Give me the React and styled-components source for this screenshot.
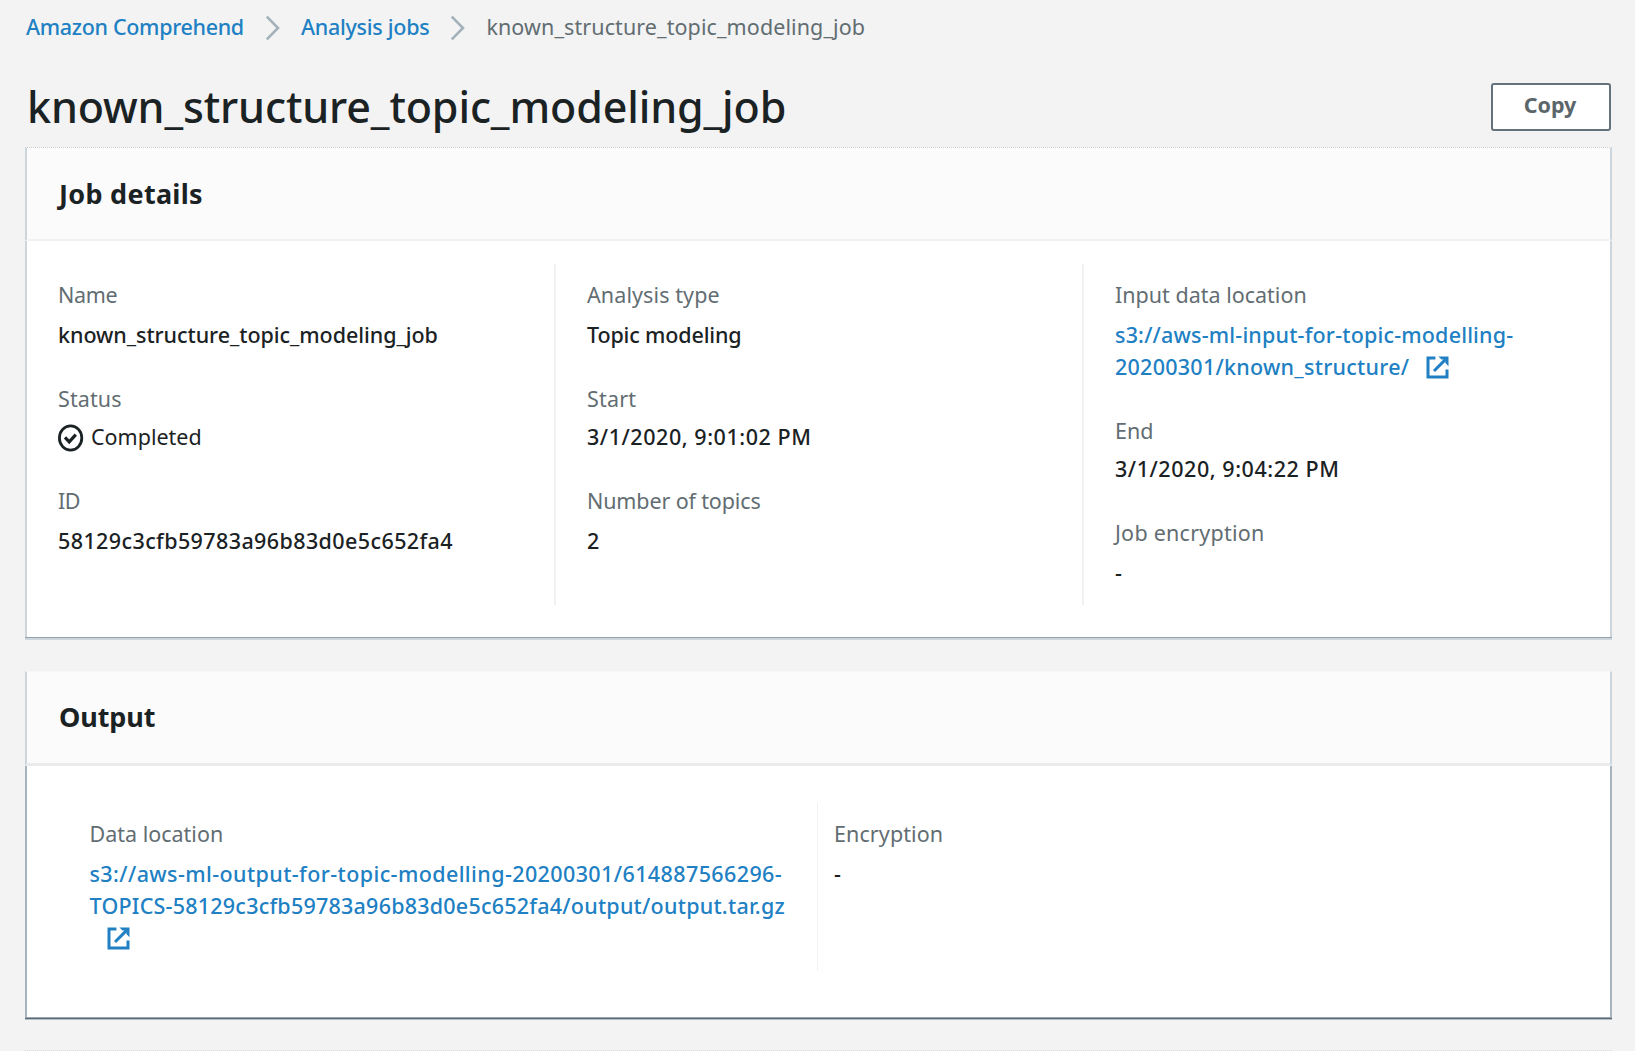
import React from 'react';
import styled, { createGlobalStyle } from 'styled-components';

const GlobalStyle = createGlobalStyle`
  * { box-sizing: border-box; }
  body {
    margin: 0;
    background: #f3f3f3;
    color: #1b2224;
    font-family: "Noto Sans", "Open Sans", sans-serif;
    font-size: 21.5px;
    line-height: 32px;
    overflow: hidden;
  }
`;

const Page = styled.main`
  height: 1051px;
  padding: 11px 23px 0 25px;
  overflow: hidden;
`;

const Breadcrumbs = styled.nav`
  display: flex;
  align-items: center;
  height: 32px;
  padding-left: 1px;
`;

const Link = styled.a`
  color: #2080c3;
  font-weight: 500;
  letter-spacing: ${(p) => p.$track || 0}px;
  white-space: nowrap;
`;

const Crumb = styled.span`
  color: #626d72;
  letter-spacing: 0.09px;
`;

const Separator = styled.svg`
  width: 16px;
  height: 26px;
  margin: 1px 20px 0 21px;
  flex: none;
`;

const TitleRow = styled.header`
  display: flex;
  justify-content: space-between;
  align-items: flex-start;
  height: 104px;
  padding: 37px 1px 0;
`;

const Title = styled.h1`
  margin: 0;
  padding-left: 1px;
  font-size: 43px;
  font-weight: 500;
  line-height: 54px;
  letter-spacing: -0.13px;
`;

const CopyButton = styled.button`
  width: 120px;
  height: 48px;
  margin-top: 3px;
  padding: 0 2px 5px 0;
  border: 2px solid #65727a;
  border-radius: 3px;
  background: #fff;
  color: #5b666b;
  font: 700 21.5px/32px "Noto Sans", sans-serif;
`;

const Card = styled.section`
  margin-bottom: ${(p) => p.$gap}px;
`;

const CardHeader = styled.div`
  display: flex;
  align-items: center;
  height: ${(p) => p.$height}px;
  padding: 0 0 ${(p) => p.$lift || 0}px 32px;
  border: 2px solid #cdd5dc;
  border-top: 1px dotted ${(p) => p.$top};
  border-bottom: ${(p) => p.$rule};
  background: #fbfbfb;
`;

const Heading = styled.h2`
  margin: 0;
  font-size: 27px;
  line-height: 34px;
  font-weight: 700;
  letter-spacing: ${(p) => p.$track}px;
`;

const DetailsBody = styled.div`
  display: grid;
  grid-template-columns: 527px 528px 1fr;
  padding: 23px 0 32px;
  background: #fff;
  border: solid #cdd5dc;
  border-width: 0 2px;
  box-shadow: 0 1px 0 #93a2ad, 0 3px 0 #cdd6dd;
`;

const OutputBody = styled.div`
  display: grid;
  grid-template-columns: 790px 1fr;
  padding: 37px 0 46px;
  background: #fff;
  border: solid #a5b4bf;
  border-width: 0 2px;
  box-shadow: 0 1px 0 #98a5ae, 0 2px 0 #5f6b73, 0 3px 0 #b3c0ca;
`;

const Column = styled.div`
  height: ${(p) => p.$height}px;
  padding: 15px 0 0 ${(p) => p.$inset}px;
  border-left: ${(p) => p.$line || 0}px solid #f1f1f1;
`;

const Item = styled.div`
  margin-bottom: 32px;
`;

const Label = styled.div`
  color: #626d72;
  letter-spacing: ${(p) => p.$track || 0}px;
`;

const Value = styled.div`
  display: ${(p) => (p.$row ? 'flex' : 'block')};
  align-items: center;
  margin-top: ${(p) => (p.$tight ? 6 : 8)}px;
  font-weight: 500;
  letter-spacing: ${(p) => p.$track || 0}px;
  white-space: nowrap;
`;

const StatusText = styled.span`
  margin-left: 7px;
  font-weight: 400;
`;

const CheckSvg = styled.svg`
  width: 26px;
  height: 28px;
  margin-top: 2px;
`;

const ExternalSvg = styled.svg`
  width: 23px;
  height: 23px;
  margin-left: ${(p) => p.$offset}px;
  vertical-align: -4px;
`;

const NextCard = styled.section`
  height: 1px;
  border-top: 1px dotted #d3dbe0;
`;

const Chevron = () => (
  <Separator viewBox="0 0 16 26" fill="none" stroke="#a3b1bb" strokeWidth="2.6">
    <path d="M1.8 1.6 13 13 1.8 24.4" />
  </Separator>
);

const CheckIcon = () => (
  <CheckSvg viewBox="0 0 26 28" fill="none" stroke="#1b2224" strokeWidth="2.8">
    <ellipse cx="12.6" cy="14" rx="11.2" ry="12.2" />
    <path d="M7 13.4l4.2 4.4 6.6-7.2" strokeWidth="3.2" />
  </CheckSvg>
);

const ExternalIcon = ({ offset }) => (
  <ExternalSvg $offset={offset} viewBox="0 0 23 23" fill="none" stroke="#2080c3" strokeWidth="3">
    <path d="M9.4 2H2V21H21V13.6" />
    <path d="M19.6 3.4 8 15" />
    <path d="M12.4 .5H22.5V10.2L19.4 7V3.6H15.6Z" fill="#2080c3" stroke="none" />
  </ExternalSvg>
);

export default function App() {
  return (
    <Page>
      <GlobalStyle />
      <Breadcrumbs>
        <Link $track={-0.32}>Amazon Comprehend</Link>
        <Chevron />
        <Link $track={-0.27}>Analysis jobs</Link>
        <Chevron />
        <Crumb>known_structure_topic_modeling_job</Crumb>
      </Breadcrumbs>
      <TitleRow>
        <Title>known_structure_topic_modeling_job</Title>
        <CopyButton>Copy</CopyButton>
      </TitleRow>

      <Card $gap={34}>
        <CardHeader $height={94} $top="#c9d0d4" $rule="2px solid #f1f2f2">
          <Heading $track={0.3}>Job details</Heading>
        </CardHeader>
        <DetailsBody>
          <Column $height={341} $inset={31}>
            <Item>
              <Label $track={-0.3}>Name</Label>
              <Value $track={-0.06}>known_structure_topic_modeling_job</Value>
            </Item>
            <Item>
              <Label $track={0.1}>Status</Label>
              <Value $row $tight>
                <CheckIcon />
                <StatusText>Completed</StatusText>
              </Value>
            </Item>
            <Item>
              <Label $track={-0.5}>ID</Label>
              <Value $track={0.4}>58129c3cfb59783a96b83d0e5c652fa4</Value>
            </Item>
          </Column>
          <Column $height={341} $inset={31} $line={2}>
            <Item>
              <Label $track={0.1}>Analysis type</Label>
              <Value $track={-0.15}>Topic modeling</Value>
            </Item>
            <Item>
              <Label $track={0.2}>Start</Label>
              <Value $tight $track={0.55}>3/1/2020, 9:01:02 PM</Value>
            </Item>
            <Item>
              <Label $track={-0.13}>Number of topics</Label>
              <Value>2</Value>
            </Item>
          </Column>
          <Column $height={341} $inset={31} $line={2}>
            <Item>
              <Label>Input data location</Label>
              <Value>
                <Link $track={0.18}>s3://aws-ml-input-for-topic-modelling-</Link>
                <br />
                <Link $track={0.26}>20200301/known_structure/</Link>
                <ExternalIcon offset={16.5} />
              </Value>
            </Item>
            <Item>
              <Label>End</Label>
              <Value $tight $track={0.55}>3/1/2020, 9:04:22 PM</Value>
            </Item>
            <Item>
              <Label $track={0.25}>Job encryption</Label>
              <Value>-</Value>
            </Item>
          </Column>
        </DetailsBody>
      </Card>

      <Card $gap={33}>
        <CardHeader $height={95} $lift={2} $top="#f3f3f3" $rule="3px solid #e9ebec">
          <Heading $track={-0.1}>Output</Heading>
        </CardHeader>
        <OutputBody>
          <Column $height={168} $inset={62.5}>
            <Item>
              <Label>Data location</Label>
              <Value>
                <Link $track={0.4}>s3://aws-ml-output-for-topic-modelling-20200301/614887566296-</Link>
                <br />
                <Link $track={0.23}>TOPICS-58129c3cfb59783a96b83d0e5c652fa4/output/output.tar.gz</Link>
                <br />
                <ExternalIcon offset={17} />
              </Value>
            </Item>
          </Column>
          <Column $height={168} $inset={16} $line={1}>
            <Item>
              <Label $track={0.1}>Encryption</Label>
              <Value>-</Value>
            </Item>
          </Column>
        </OutputBody>
      </Card>

      <NextCard />
    </Page>
  );
}
